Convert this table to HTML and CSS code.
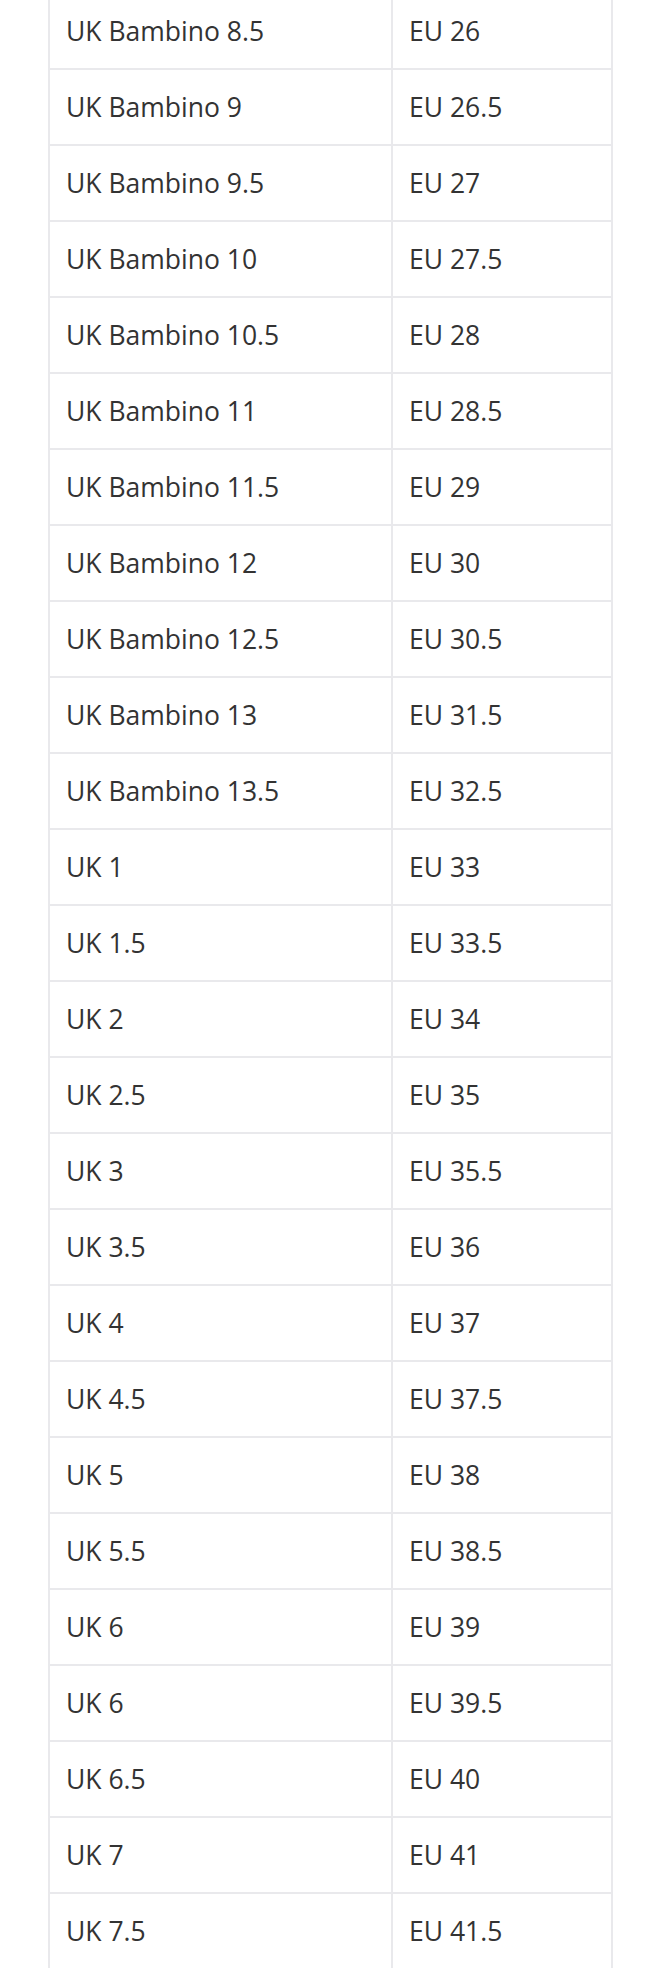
FILE: index.html
```html
<!DOCTYPE html>
<html lang="en">
<head>
  <meta charset="UTF-8">
  <title>Size Guide</title>
  <meta name="viewport" content="width=device-width, initial-scale=1.0">
  <link rel="stylesheet" href="styles.css">
</head>
<body>

<div class="size-guide">
  <table class="size-table">
    <colgroup>
      <col class="col-uk">
      <col class="col-eu">
    </colgroup>
    <tbody>
      <tr><td>UK Bambino 8.5</td><td>EU 26</td></tr>
      <tr><td>UK Bambino 9</td><td>EU 26.5</td></tr>
      <tr><td>UK Bambino 9.5</td><td>EU 27</td></tr>
      <tr><td>UK Bambino 10</td><td>EU 27.5</td></tr>
      <tr><td>UK Bambino 10.5</td><td>EU 28</td></tr>
      <tr><td>UK Bambino 11</td><td>EU 28.5</td></tr>
      <tr><td>UK Bambino 11.5</td><td>EU 29</td></tr>
      <tr><td>UK Bambino 12</td><td>EU 30</td></tr>
      <tr><td>UK Bambino 12.5</td><td>EU 30.5</td></tr>
      <tr><td>UK Bambino 13</td><td>EU 31.5</td></tr>
      <tr><td>UK Bambino 13.5</td><td>EU 32.5</td></tr>
      <tr><td>UK 1</td><td>EU 33</td></tr>
      <tr><td>UK 1.5</td><td>EU 33.5</td></tr>
      <tr><td>UK 2</td><td>EU 34</td></tr>
      <tr><td>UK 2.5</td><td>EU 35</td></tr>
      <tr><td>UK 3</td><td>EU 35.5</td></tr>
      <tr><td>UK 3.5</td><td>EU 36</td></tr>
      <tr><td>UK 4</td><td>EU 37</td></tr>
      <tr><td>UK 4.5</td><td>EU 37.5</td></tr>
      <tr><td>UK 5</td><td>EU 38</td></tr>
      <tr><td>UK 5.5</td><td>EU 38.5</td></tr>
      <tr><td>UK 6</td><td>EU 39</td></tr>
      <tr><td>UK 6</td><td>EU 39.5</td></tr>
      <tr><td>UK 6.5</td><td>EU 40</td></tr>
      <tr><td>UK 7</td><td>EU 41</td></tr>
      <tr><td>UK 7.5</td><td>EU 41.5</td></tr>
    </tbody>
  </table>
</div>

</body>
</html>
```

FILE: styles.css
```css
body {
  margin: 0;
  font-family: 'Open Sans', 'Liberation Sans', sans-serif;
  background: #fff;
  color: #333;
}

.size-guide {
  padding-left: 48px;
  margin-top: -8px;
}

.size-table {
  border-collapse: collapse;
  table-layout: fixed;
  width: 563px;
}

.col-uk {
  width: 343px;
}

.col-eu {
  width: 220px;
}

.size-table td {
  border: 2px solid #e9e9ec;
  height: 76px;
  padding: 0 16px;
  font-size: 26.5px;
  line-height: 40px;
  vertical-align: middle;
  box-sizing: border-box;
}
```
